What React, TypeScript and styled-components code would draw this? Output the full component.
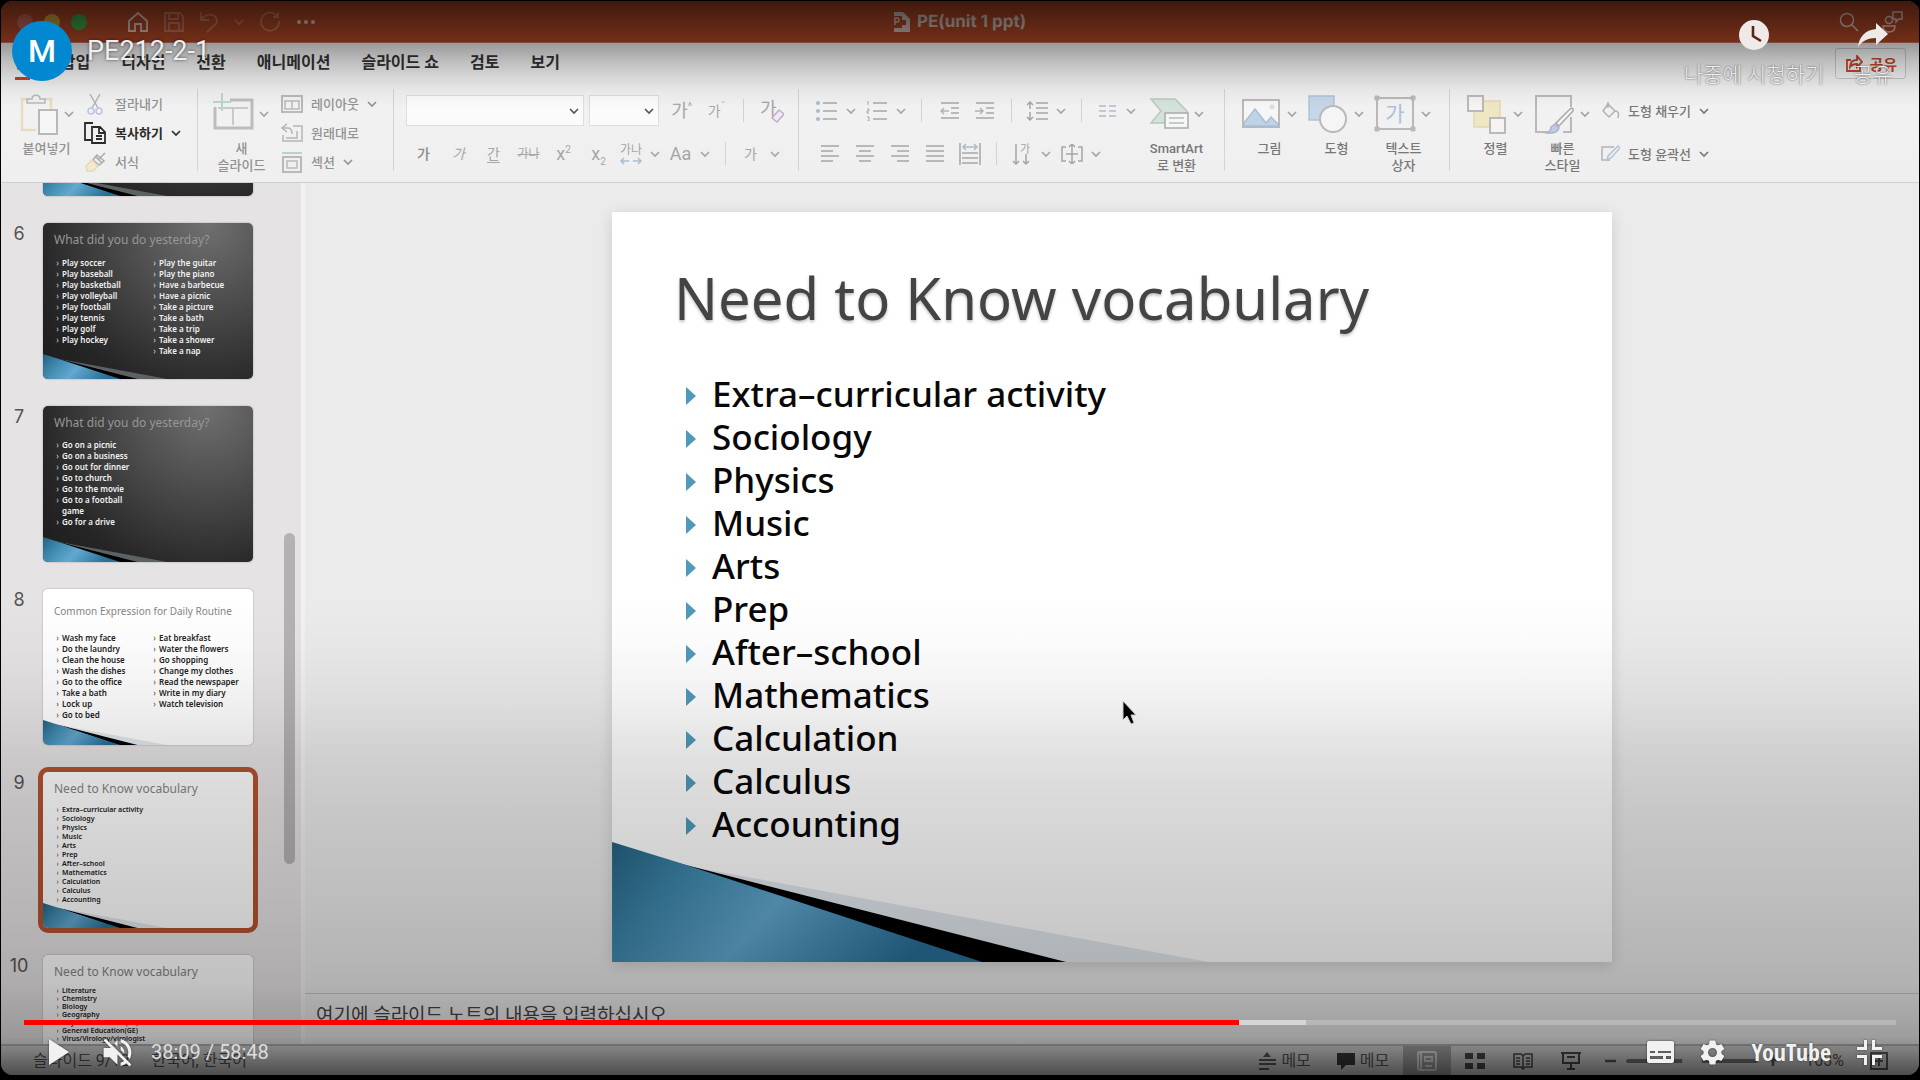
import React from "react";
import styled, { createGlobalStyle, css } from "styled-components";

const UI = `Roboto, "Noto Sans CJK KR", sans-serif`;
const SLIDE = `"Noto Sans", "Noto Sans CJK KR", sans-serif`;

const Global = createGlobalStyle`
  * { box-sizing: border-box; }
  html, body { margin: 0; background: #000; }
  button, input, select, textarea { font: inherit; color: inherit; }
  button { border: 0; padding: 0; background: none; }
  ul, h1, h2, p { margin: 0; padding: 0; }
  ul { list-style: none; }
`;

/* ---------- shell ---------- */
const Page = styled.div`
  position: relative;
  height: 100vh;
  padding: 1px 1px 5px;
  background: #000;
  overflow: hidden;
  font-family: ${UI};
`;
const AppWindow = styled.div`
  display: flex;
  flex-direction: column;
  height: 100%;
  border-radius: 12px;
  overflow: hidden;
  background: #ececec;
`;

/* ---------- title bar ---------- */
const TitleBar = styled.header`
  display: grid;
  grid-template-columns: 1fr auto 1fr;
  align-items: center;
  height: 42px;
  flex: none;
  padding: 0 16px;
  background: #b84a27;
  border-bottom: 1px solid #c9785f;
  color: #fff;
`;
const BarSide = styled.div<{ $end?: boolean }>`
  display: flex;
  align-items: center;
  gap: ${(p) => (p.$end ? 22 : 15)}px;
  justify-content: ${(p) => (p.$end ? "flex-end" : "flex-start")};
`;
const Lights = styled.div`
  display: flex;
  gap: 11px;
  margin-right: 25px;
`;
const Light = styled.span<{ $c: string }>`
  width: 16px;
  height: 16px;
  border-radius: 50%;
  background: ${(p) => p.$c};
`;
const BarButton = styled.button<{ $dim?: boolean }>`
  display: flex;
  align-items: center;
  opacity: ${(p) => (p.$dim ? 0.28 : 0.75)};
`;
const DocTitle = styled.h1`
  display: flex;
  align-items: center;
  gap: 7px;
  font: 700 17px/20px Inter, sans-serif;
  text-rendering: geometricPrecision;
  color: #dccbc5;
`;

/* ---------- tabs ---------- */
const TabBar = styled.nav`
  display: flex;
  justify-content: space-between;
  height: 42px;
  flex: none;
  padding: 5px 13px 5px 14px;
  background: #f0f0f0;
`;
const Tabs = styled.div`
  display: flex;
  gap: 31px;
`;
const Tab = styled.button<{ $on?: boolean }>`
  font-size: 16px;
  font-weight: 700;
  line-height: 26px;
  color: ${(p) => (p.$on ? "#b7472a" : "#333")};
  border-bottom: 3px solid ${(p) => (p.$on ? "#b7472a" : "transparent")};
`;
const ShareButton = styled.button`
  display: flex;
  align-items: center;
  gap: 6px;
  height: 31px;
  padding: 0 8px 0 10px;
  border: 1px solid #c8c8c8;
  border-radius: 3px;
  background: #fafafa33;
  color: #c0482a;
  font-size: 15px;
  font-weight: 700;
`;

/* ---------- ribbon ---------- */
const Ribbon = styled.div`
  display: flex;
  align-items: flex-start;
  height: 98px;
  flex: none;
  padding-top: 4px;
  background: linear-gradient(#f2f2f2, #efefef);
  border-bottom: 1px solid #cfcfcf;
  color: #8c8c8c;
`;
const Group = styled.div<{ $w?: number; $pl: number; $gap?: number }>`
  display: flex;
  align-items: flex-start;
  gap: ${(p) => p.$gap ?? 7}px;
  width: ${(p) => (p.$w ? p.$w + "px" : "auto")};
  height: 82px;
  padding-left: ${(p) => p.$pl}px;
  border-right: ${(p) => (p.$w ? "1px solid #d4d4d4" : "0")};
  flex: none;
`;
const Big = styled.button`
  display: grid;
  grid-template-columns: 42px 12px;
  align-items: center;
  column-gap: 5px;
  width: 60px;
  padding-top: 4px;
  flex: none;
  color: #a2a2a2;
`;
const BigLabel = styled.span<{ $dark?: boolean }>`
  grid-column: 1 / -1;
  margin-top: 5px;
  text-align: center;
  white-space: pre;
  font-size: 13px;
  font-weight: 500;
  line-height: 17px;
  color: ${(p) => (p.$dark ? "#777" : "#929292")};
`;
const Column = styled.div`
  display: flex;
  flex-direction: column;
`;
const Small = styled.button<{ $strong?: boolean; $tall?: boolean }>`
  display: flex;
  align-items: center;
  gap: 8px;
  height: ${(p) => (p.$tall ? 43 : 29)}px;
  font-size: 13px;
  font-weight: ${(p) => (p.$strong ? 700 : 500)};
  color: ${(p) => (p.$strong ? "#2b2b2b" : p.$tall ? "#777" : "#939393")};
`;
const ToolRow = styled.div`
  display: flex;
  align-items: center;
  height: 43px;
`;
const Tool = styled.button<{ $split?: boolean }>`
  display: grid;
  grid-template-columns: ${(p) => (p.$split ? "29px 20px" : "35px")};
  place-items: center;
  padding-right: ${(p) => (p.$split ? 1 : 0)}px;
  font-size: 14px;
  font-weight: 400;
  line-height: 18px;
  color: #a6a6a6;
`;
const Glyph = styled.span<{ $k?: "b" | "i" | "u" | "s" | "big" }>`
  ${(p) => p.$k === "b" && css`font-weight: 500; color: #8a8a8a;`}
  ${(p) => p.$k === "i" && css`font-style: italic;`}
  ${(p) => p.$k === "u" && css`text-decoration: underline; text-underline-offset: 3px;`}
  ${(p) => p.$k === "s" && css`text-decoration: line-through; font-size: 12px;`}
  ${(p) => p.$k === "big" && css`font-size: 18px;`}
  sup, sub { font-size: 10px; line-height: 0; }
`;
const ToolSep = styled.span`
  width: 1px;
  height: 23px;
  margin: 0 10px 0 9px;
  background: #d2d2d2;
`;
const Combo = styled.label<{ $w: number }>`
  display: grid;
  grid-template-columns: 1fr 14px;
  align-items: center;
  width: ${(p) => p.$w}px;
  height: 31px;
  margin-right: 5px;
  border: 1px solid #dedede;
  background: #fbfbfb;
  color: #555;
  select {
    grid-area: 1 / 1 / 2 / 3;
    width: 100%;
    height: 100%;
    border: 0;
    background: none;
    appearance: none;
  }
  svg { grid-area: 1 / 2 / 2 / 3; pointer-events: none; }
`;

/* ---------- body ---------- */
const Body = styled.div`
  display: flex;
  flex: 1;
  min-height: 0;
`;
const Sidebar = styled.aside`
  display: flex;
  justify-content: space-between;
  width: 304px;
  flex: none;
  overflow: hidden;
  background: #e6e3e4;
  border-right: 4px solid #f3f2f2;
`;
const ThumbList = styled.ol`
  display: flex;
  flex-direction: column;
  gap: 27px;
  margin: -143px 0 0;
  padding: 0;
  list-style: none;
`;
const ThumbRow = styled.li`
  display: flex;
  gap: 6px;
`;
const ThumbNo = styled.span`
  width: 36px;
  text-align: center;
  font: 400 18px/21px Inter, sans-serif;
  color: #555;
`;
const Thumb = styled.article<{ $dark?: boolean; $on?: boolean }>`
  position: relative;
  display: flex;
  flex-direction: column;
  width: 210px;
  height: 156px;
  padding: 0 11px;
  overflow: hidden;
  border-radius: 5px;
  font-family: ${SLIDE};
  color: ${(p) => (p.$dark ? "#f2f2f2" : "#222")};
  background: ${(p) =>
    p.$dark ? "radial-gradient(circle at 78% 0, #707070 0, #4b4b4b 38%, #262626 75%, #1b1b1b 100%)" : "#fff"};
  box-shadow: ${(p) => (p.$on ? "0 0 0 5px #b4532f" : "0 0 1px 1px #d0cdce")};
`;
const ThumbTitle = styled.h2<{ $small?: boolean; $dark?: boolean }>`
  font-size: ${(p) => (p.$small ? 10 : 12)}px;
  line-height: 16px;
  font-weight: 400;
  white-space: nowrap;
  margin-top: ${(p) => (p.$small ? 14 : 9)}px;
  color: ${(p) => (p.$dark ? "#979797" : "#858585")};
`;
const ThumbCols = styled.div<{ $gap: number }>`
  display: grid;
  grid-template-columns: 97px 1fr;
  margin-top: ${(p) => p.$gap}px;
`;
const ThumbItems = styled.ul<{ $lh: number }>`
  font-size: ${(p) => (p.$lh < 11 ? 7 : 8)}px;
  font-weight: 600;
  line-height: ${(p) => p.$lh}px;
  white-space: pre;
  li { display: flex; gap: 3px; }
  li::before { content: "›"; width: 5px; text-align: right; opacity: 0.6; }
`;
const Scroll = styled.div`
  width: 11px;
  margin: 350px 6px 180px 0;
  border-radius: 6px;
  background: #b5b2b4;
`;

/* ---------- slide ---------- */
const Main = styled.main`
  display: flex;
  flex-direction: column;
  flex: 1;
  min-width: 0;
`;
const Canvas = styled.section`
  display: flex;
  justify-content: center;
  flex: 1;
  min-height: 0;
  padding: 29px 0 31px;
  background: #ebebeb;
`;
const Slide = styled.article`
  position: relative;
  height: 100%;
  aspect-ratio: 4 / 3;
  padding: 50px 62px 0;
  background: #fff;
  box-shadow: 0 3px 14px #00000024;
  font-family: ${SLIDE};
`;
const SlideTitle = styled.h1`
  font-size: 58px;
  line-height: 72px;
  font-weight: 400;
  color: #444;
  white-space: nowrap;
  text-shadow: 0 2px 3px #00000040;
`;
const Vocab = styled.ul`
  margin: 38px 0 0 12px;
  font-size: 35px;
  font-weight: 500;
  line-height: 43px;
  color: #080808;
`;
const VocabItem = styled.li`
  display: flex;
  align-items: center;
  gap: 16px;
  height: 43px;
  &::before {
    content: "";
    margin-top: 4px;
    border: 9px solid transparent;
    border-left: 10px solid #4f9ab8;
    border-right: 0;
  }
`;
const Decor = styled.svg`
  position: absolute;
  left: 0;
  bottom: 0;
  width: 100%;
  pointer-events: none;
`;
const Pointer = styled.svg`
  position: absolute;
  left: 51%;
  top: 65%;
`;
const Notes = styled.div`
  height: 51px;
  flex: none;
  border-top: 1px solid #c6c6c6;
  background: #ececec;
  input {
    display: block;
    width: 100%;
    height: 42px;
    padding: 0 11px;
    border: 0;
    background: none;
    font-size: 19px;
  }
  input::placeholder { color: #444; opacity: 1; }
`;

/* ---------- status ---------- */
const StatusBar = styled.footer`
  display: flex;
  align-items: center;
  justify-content: space-between;
  height: 31px;
  flex: none;
  padding: 0 31px 0 32px;
  border-top: 2px solid #b4b4b4;
  background: #d8d8d8;
  color: #555;
  font-size: 16px;
  line-height: 24px;
`;
const StatusSide = styled.div<{ $gap: number }>`
  display: flex;
  align-items: center;
  gap: ${(p) => p.$gap}px;
  height: 100%;
`;
const StatusButton = styled.button`
  display: flex;
  align-items: center;
  gap: 5px;
  color: #5a5a5a;
`;
const Views = styled.div`
  display: flex;
  height: 100%;
  margin: 0 -16px 0 -12px;
`;
const View = styled.button<{ $on?: boolean }>`
  display: grid;
  place-items: center;
  width: 48px;
  height: 100%;
  background: ${(p) => (p.$on ? "#a6a6a6" : "none")};
  color: ${(p) => (p.$on ? "#e8e8e8" : "#4a4a4a")};
`;
const ZoomSlider = styled.input`
  appearance: none;
  width: 132px;
  height: 4px;
  margin: 0;
  border-radius: 2px;
  background: #777;
  &::-webkit-slider-thumb {
    appearance: none;
    width: 20px;
    height: 20px;
    border-radius: 50%;
    background: #d6d6d6;
  }
`;

/* ---------- player ---------- */
const Player = styled.div`
  position: absolute;
  inset: 0;
  display: flex;
  flex-direction: column;
  justify-content: space-between;
  padding-bottom: 1px;
  color: #eee;
  background:
    linear-gradient(#000000aa 0, #0000005f 42px, #00000038 60px, #0000001a 78px, #0000000a 92px, transparent 108px),
    linear-gradient(transparent 55%, #00000005 60%, #0000000f 65%, #0000001e 70%, #00000027 75%, #00000033 84%, #0000003e 91%, #00000055 96%, #0000006a 97.2%, #000000b0 100%);
`;
const PlayerTop = styled.div`
  display: flex;
  align-items: flex-start;
  justify-content: space-between;
  padding: 20px 28px 0 12px;
`;
const Channel = styled.a`
  display: flex;
  align-items: center;
  gap: 15px;
  padding-top: 1px;
  color: #eee;
  text-decoration: none;
  font-size: 27px;
  line-height: 32px;
  text-shadow: 0 0 3px #000000a0;
`;
const Avatar = styled.span`
  display: grid;
  place-items: center;
  width: 60px;
  height: 60px;
  border-radius: 50%;
  background: #0288d1;
  color: #fff;
  font-size: 32px;
  font-weight: 500;
  text-shadow: none;
`;
const TopActions = styled.div`
  display: flex;
  gap: 29px;
`;
const TopAction = styled.button`
  display: flex;
  flex-direction: column;
  align-items: center;
  gap: 9px;
  font-size: 21px;
  font-weight: 300;
  line-height: 32px;
  text-shadow: 0 0 2px #000000b0;
`;
const Seek = styled.input`
  appearance: none;
  display: block;
  width: calc(100% - 48px);
  height: 5px;
  margin: 0 24px;
  background: linear-gradient(
    to right,
    #f00 0 64.9%,
    #d6d6d6 64.9% 68.5%,
    #ffffff38 68.5%
  );
  &::-webkit-slider-thumb { appearance: none; width: 0; height: 0; }
`;
const Controls = styled.div`
  display: flex;
  align-items: center;
  justify-content: space-between;
  height: 54px;
  padding: 0 38px 0 49px;
`;
const ControlSide = styled.div<{ $gap: number }>`
  display: flex;
  align-items: center;
  gap: ${(p) => p.$gap}px;
`;
const Control = styled.button`
  display: flex;
  color: #f1f1f1;
  filter: drop-shadow(0 0 1px #00000080);
`;
const Time = styled.span`
  margin-left: -15px;
  font-size: 20px;
  color: #ddd;
`;
const Brand = styled.a`
  color: #f1f1f1;
  text-decoration: none;
  font: 700 24px/24px "Liberation Sans Narrow", "Open Sans Condensed", "Liberation Sans", sans-serif;
  text-shadow: 0 0 2px #00000080;
`;

/* ---------- drawings ---------- */
const Ico = ({ w = 20, h = w, vb = `0 0 ${w} ${h}`, sw = 1.5, children }: any) => (
  <svg width={w} height={h} viewBox={vb} fill="none" stroke="currentColor" strokeWidth={sw} aria-hidden="true">
    {children}
  </svg>
);
const Chev = () => (
  <Ico w={10} h={10} sw={1.7}>
    <path d="M1 3l4 4 4-4" />
  </Ico>
);
const G = "#b9b9b9";

const pasteIcon = (
  <Ico w={42} h={42}>
    <path d="M12 6H5v31h14M28 6h6v10" stroke="#eadcc0" strokeWidth="2.5" />
    <path d="M10 10V6h5c0-5 8-5 8 0h5v4z" stroke={G} />
    <rect x="22" y="17" width="18" height="24" stroke={G} fill="#f5f5f5" strokeWidth="2" />
  </Ico>
);
const newSlideIcon = (
  <Ico w={42} h={42}>
    <path d="M18 7h22v28H3V14" stroke="#bdbdbd" strokeWidth="3" />
    <path d="M6 15h30M21 15v17" stroke="#c9c9c9" strokeWidth="2" />
    <path d="M10 0v18M1 9h18" stroke="#bcd5cc" strokeWidth="2" />
  </Ico>
);
const smartIcon = (
  <Ico w={42} h={42}>
    <path d="M4 6h24l12 12v12H4l10-12z" fill="#d5e2d9" stroke="#b8c9be" />
    <rect x="18" y="20" width="23" height="15" fill="#f6f6f6" stroke="#a5ada8" />
    <path d="M22 25h15M22 30h15" stroke="#bbb" />
  </Ico>
);
const pictureIcon = (
  <Ico w={42} h={42}>
    <rect x="3" y="7" width="36" height="27" fill="#f6f6f6" stroke={G} strokeWidth="2" />
    <path d="M4 30l11-14 11 14 5-6 7 7v2H4z" fill="#bfd2e6" stroke="#a9bfd6" />
    <circle cx="32" cy="14" r="2.5" fill="#ddd" stroke="none" />
  </Ico>
);
const shapesIcon = (
  <Ico w={42} h={42}>
    <rect x="2" y="3" width="25" height="24" fill="#c5d6e8" stroke="#b0c2d6" />
    <circle cx="26" cy="26" r="13" fill="#f5f5f5" stroke={G} strokeWidth="2" />
  </Ico>
);
const textBoxIcon = (
  <Ico w={42} h={42}>
    <rect x="3" y="5" width="36" height="31" stroke={G} strokeWidth="2" />
    <path d="M1 3h4v4H1zM37 3h4v4h-4zM1 34h4v4H1zM37 34h4v4h-4z" fill={G} stroke={G} strokeWidth="1" />
    <text x="21" y="28" textAnchor="middle" fontSize="21" fill="#a9c0dc" stroke="none">가</text>
  </Ico>
);
const arrangeIcon = (
  <Ico w={42} h={42}>
    <rect x="8" y="8" width="26" height="26" fill="#efe6c4" stroke="#e2d7ad" />
    <rect x="2" y="3" width="15" height="15" fill="#f6f3f0" stroke={G} strokeWidth="2" />
    <rect x="24" y="25" width="15" height="15" fill="#f6f3f0" stroke={G} strokeWidth="2" />
  </Ico>
);
const quickIcon = (
  <Ico w={42} h={42}>
    <path d="M38 14V3H3v36h12M38 24v15h-8" stroke={G} strokeWidth="2" />
    <path d="M40 18L26 33l-3-3 14-14q4-2 3 2z" fill="#f4f4f4" stroke="#a8a8a8" />
    <path d="M22 31l4 4q-2 6-12 5 4-2 4-6z" fill="#c3cbe2" stroke="#aab3cf" />
  </Ico>
);
const cutIcon = (
  <Ico w={23} h={22}>
    <path d="M6 1l8 14M16 1L8 15" stroke="#b4b4b4" />
    <circle cx="7" cy="18" r="3" stroke="#b8c4e0" />
    <circle cx="15" cy="18" r="3" stroke="#b8c4e0" />
  </Ico>
);
const copyIcon = (
  <Ico w={23} h={22} sw={1.8}>
    <path d="M8 18H1V1h8" />
    <path d="M8 5h8l5 5v11H8zM15 5v6h6M12 14h6M12 17h6" />
  </Ico>
);
const brushIcon = (
  <Ico w={23} h={22}>
    <path d="M21 2l-6 6M11 5l7 7M13 4l7 6-5 4-6-5z" stroke="#ababab" />
    <path d="M8 9l6 6-5 5H3l-1-5z" fill="#f3e9d2" stroke="#e6d8b6" />
  </Ico>
);
const layoutIcon = (
  <Ico w={22} h={20}>
    <rect x="1" y="2" width="20" height="16" stroke={G} strokeWidth="2" />
    <path d="M4 7h14v8H4zM11 7v8" stroke={G} />
  </Ico>
);
const resetIcon = (
  <Ico w={22} h={20}>
    <path d="M12 3h9v15H2v-6M16 8v7H5" stroke="#c4c4c4" strokeWidth="2" />
    <path d="M6 1L1 5l5 4M1 5h6q4 0 4 6" stroke="#b5b5b5" />
  </Ico>
);
const sectionIcon = (
  <Ico w={22} h={22}>
    <path d="M1 2h20" stroke="#b9d2c8" strokeWidth="2" />
    <rect x="2" y="6" width="18" height="15" stroke={G} strokeWidth="2" />
    <rect x="6" y="10" width="10" height="7" stroke={G} />
  </Ico>
);
const bars = (rows: [number, number][], extra?: React.ReactNode) => (
  <Ico w={20} h={20}>
    {rows.map(([a, b], i) => (
      <path key={i} d={`M${a} ${2 + i * 5}H${b}`} />
    ))}
    {extra}
  </Ico>
);
const bulletsIcon = (
  <Ico w={22} h={20}>
    <path d="M7 2h14M7 10h14M7 18h14" />
    <g fill="#a9bccb" stroke="none">
      <circle cx="2" cy="2" r="2" /><circle cx="2" cy="10" r="2" /><circle cx="2" cy="18" r="2" />
    </g>
  </Ico>
);
const numbersIcon = (
  <Ico w={22} h={20}>
    <path d="M7 2h14M7 10h14M7 18h14" />
    <path d="M2 0v4M1 8h2v2H1v2h2M1 16h2v4H1" strokeWidth="1" />
  </Ico>
);
const outdentIcon = (
  <Ico w={20} h={20}><path d="M1 2h18M11 7h8M11 12h8M1 17h18" /><path d="M9 10H1m3-3l-3 3 3 3" stroke="#aab4c0" /></Ico>
);
const indentIcon = (
  <Ico w={20} h={20}><path d="M1 2h18M11 7h8M11 12h8M1 17h18" /><path d="M0 10h8M5 7l3 3-3 3" stroke="#aab4c0" /></Ico>
);
const spacingIcon = (
  <Ico w={22} h={20}><path d="M10 2h12M10 7h12M10 12h12M10 18h12M4 1v7M1 4l3-3 3 3M4 11v8M1 16l3 3 3-3" /></Ico>
);
const columnsIcon = (
  <Ico w={18} h={14}><path d="M1 2h7M1 7h7M1 12h7M11 2h7M11 7h7M11 12h7" stroke="#b4b9cc" /></Ico>
);
const distributeIcon = (
  <Ico w={22} h={22}><path d="M1 0v22M21 0v22M3 10h16M3 15h16M3 20h16" /><path d="M4 4h14M7 1L4 4l3 3M15 1l3 3-3 3" stroke="#a9bccf" /></Ico>
);
const directionIcon = (
  <Ico w={20} h={22}>
    <path d="M4 1v20M1 18l3 3 3-3M14 11v10M11 18l3 3 3-3" />
    <text x="8" y="10" fontSize="11" fill="currentColor" stroke="none">가</text>
  </Ico>
);
const alignTextIcon = (
  <Ico w={24} h={20}><path d="M6 3H2v14h4M18 3h4v14h-4M12 0v20M9 3l3-3 3 3M9 17l3 3 3-3M6 10h12" /></Ico>
);
const fillIcon = (
  <Ico w={20} h={20}><path d="M8 3l7 7-6 6-6-6 5-7zM8 1v6M15 10q5 0 3 7" stroke="#b2b2b2" /></Ico>
);
const outlineIcon = (
  <Ico w={20} h={20}><path d="M14 3H2v13h8" stroke="#b2b2b2" /><path d="M18 2l2 2-9 10-4 2 1-4z" stroke="#b4c2d8" /></Ico>
);

const Wedge = ({ dark }: { dark?: boolean }) => (
  <Decor viewBox="0 0 999 120" aria-hidden="true">
    <defs>
      <linearGradient id={dark ? "wedgeDark" : "wedge"} x1="0" y1="0" x2="1" y2="0.3">
        <stop offset="0" stopColor="#24607f" />
        <stop offset="0.25" stopColor="#3d87ac" />
        <stop offset="0.55" stopColor="#62a8d0" />
        <stop offset="1" stopColor="#286f98" />
      </linearGradient>
    </defs>
    <path d="M70 23Q250 56 596 120H440z" fill={dark ? "#5c6164" : "#e2e9ef"} />
    <path d="M62 20L454 120H360z" fill="#000" />
    <path d="M0 0L68 21 370 120H0z" fill={`url(#${dark ? "wedgeDark" : "wedge"})`} />
  </Decor>
);

const vocabulary = [
  "Extra–curricular activity", "Sociology", "Physics", "Music", "Arts", "Prep",
  "After–school", "Mathematics", "Calculation", "Calculus", "Accounting",
];

type Deck = { no: number; title: string; dark?: boolean; on?: boolean; small?: boolean; gap: number; lh: number; a: string[]; b?: string[] };
const deck: Deck[] = [
  { no: 5, title: "", dark: true, gap: 0, lh: 11, a: [] },
  {
    no: 6, title: "What did you do yesterday?", dark: true, gap: 9, lh: 11,
    a: ["Play soccer", "Play baseball", "Play basketball", "Play volleyball", "Play football", "Play tennis", "Play golf", "Play hockey"],
    b: ["Play the guitar", "Play the piano", "Have a barbecue", "Have a picnic", "Take a picture", "Take a bath", "Take a trip", "Take a shower", "Take a nap"],
  },
  {
    no: 7, title: "What did you do yesterday?", dark: true, gap: 8, lh: 11,
    a: ["Go on a picnic", "Go on a business", "Go out for dinner", "Go to church", "Go to the movie", "Go to a football\ngame", "Go for a drive"],
  },
  {
    no: 8, title: "Common Expression for Daily Routine", small: true, gap: 13, lh: 11,
    a: ["Wash my face", "Do the laundry", "Clean the house", "Wash the dishes", "Go to the office", "Take a bath", "Lock up", "Go to bed"],
    b: ["Eat breakfast", "Water the flowers", "Go shopping", "Change my clothes", "Read the newspaper", "Write in my diary", "Watch television"],
  },
  { no: 9, title: "Need to Know vocabulary", on: true, gap: 8, lh: 9, a: vocabulary },
  {
    no: 10, title: "Need to Know vocabulary", gap: 7, lh: 8,
    a: ["Literature", "Chemistry", "Biology", "Geography", "Physical Education(PE)", "General Education(GE)", "Virus/Virology/virologist"],
  },
];

const BigTool = ({ icon, label, dark }: { icon: React.ReactNode; label: string; dark?: boolean }) => (
  <Big type="button">
    {icon}
    <Chev />
    <BigLabel $dark={dark}>{label}</BigLabel>
  </Big>
);
const T = ({ children, split, name }: { children: React.ReactNode; split?: boolean; name: string }) => (
  <Tool type="button" $split={split} aria-label={name}>
    {children}
    {split && <Chev />}
  </Tool>
);

export default function App() {
  return (
    <Page>
      <Global />
      <AppWindow>
        <TitleBar>
          <BarSide>
            <Lights>
              <Light $c="#d0695c" /><Light $c="#d9a83c" /><Light $c="#3fae4e" />
            </Lights>
            <BarButton type="button" aria-label="홈">
              <Ico w={22} h={22} sw={1.8}><path d="M2 10l9-8 9 8v10h-6v-7H8v7H2z" /></Ico>
            </BarButton>
            <BarButton type="button" $dim aria-label="저장">
              <Ico w={20} h={20} sw={1.8}><path d="M1 1h15l3 3v15H1zM5 1v6h9V1M5 19v-8h10v8" /></Ico>
            </BarButton>
            <BarButton type="button" $dim aria-label="실행 취소">
              <Ico w={20} h={22} sw={1.8}><path d="M2 1v8h8M2 9q5-7 12-5 6 4 3 9l-9 8" /></Ico>
            </BarButton>
            <BarButton type="button" $dim aria-label="실행 취소 목록"><Chev /></BarButton>
            <BarButton type="button" $dim aria-label="다시 실행">
              <Ico w={22} h={22} sw={1.8}><path d="M18 5a9 9 0 1 0 2 5M19 1v5h-5" /></Ico>
            </BarButton>
            <BarButton type="button" aria-label="더 보기">
              <Ico w={20} h={6}><g fill="currentColor" stroke="none"><circle cx="3" cy="3" r="2" /><circle cx="10" cy="3" r="2" /><circle cx="17" cy="3" r="2" /></g></Ico>
            </BarButton>
          </BarSide>
          <DocTitle>
            <Ico w={16} h={20}>
              <path d="M0 0h9l7 7v13H0v-4h8v-3h4V8H8V4H0z" fill="currentColor" stroke="none" />
              <path d="M1 13V6h3q2 2 0 4H1" strokeWidth="1.5" />
            </Ico>
            PE(unit 1 ppt)
          </DocTitle>
          <BarSide $end>
            <BarButton type="button" aria-label="검색">
              <Ico w={20} h={20}><circle cx="8" cy="8" r="6.5" /><path d="M13 13l6 6" /></Ico>
            </BarButton>
            <BarButton type="button" aria-label="메모">
              <Ico w={22} h={22}><circle cx="8" cy="9" r="3.5" /><path d="M2 15h12q0 6-6 6t-6-6zM12 1h9v7h-3l-3 3V8h-3z" /></Ico>
            </BarButton>
          </BarSide>
        </TitleBar>

        <TabBar>
          <Tabs>
            {["홈", "삽입", "디자인", "전환", "애니메이션", "슬라이드 쇼", "검토", "보기"].map((t, i) => (
              <Tab key={t} type="button" $on={i === 0}>{t}</Tab>
            ))}
          </Tabs>
          <ShareButton type="button">
            <Ico w={17} h={17} sw={1.8}><path d="M5 5H1v11h13v-4M4 12q0-7 7-7V1l5 6-5 5V9q-5 0-7 3z" /></Ico>
            공유
          </ShareButton>
        </TabBar>

        <Ribbon>
          <Group $w={197} $pl={16} $gap={7}>
            <BigTool icon={pasteIcon} label="붙여넣기" />
            <Column>
              <Small type="button">{cutIcon}잘라내기</Small>
              <Small type="button" $strong>{copyIcon}복사하기<Chev /></Small>
              <Small type="button">{brushIcon}서식</Small>
            </Column>
          </Group>
          <Group $w={196} $pl={14} $gap={9}>
            <BigTool icon={newSlideIcon} label={"새\n슬라이드"} />
            <Column>
              <Small type="button">{layoutIcon}레이아웃<Chev /></Small>
              <Small type="button">{resetIcon}원래대로</Small>
              <Small type="button">{sectionIcon}섹션<Chev /></Small>
            </Column>
          </Group>
          <Group $w={405} $pl={12}>
            <Column>
              <ToolRow>
                <Combo $w={178}><select aria-label="글꼴" /><Chev /></Combo>
                <Combo $w={70}><select aria-label="글꼴 크기" /><Chev /></Combo>
                <T name="글꼴 크게"><Glyph $k="big">가<sup>^</sup></Glyph></T>
                <T name="글꼴 작게"><Glyph>가<sup>ˇ</sup></Glyph></T>
                <ToolSep />
                <T name="서식 지우기">
                  <Ico w={24} h={24}>
                    <text x="0" y="16" fontSize="18" fill="currentColor" stroke="none">가</text>
                    <path d="M19 11l5 4-7 8-5-4z" fill="#f1e9f2" stroke="#c3aec6" />
                  </Ico>
                </T>
              </ToolRow>
              <ToolRow>
                <T name="굵게"><Glyph $k="b">가</Glyph></T>
                <T name="기울임꼴"><Glyph $k="i">가</Glyph></T>
                <T name="밑줄"><Glyph $k="u">간</Glyph></T>
                <T name="취소선"><Glyph $k="s">가나</Glyph></T>
                <T name="위 첨자"><Glyph $k="big">x<sup>2</sup></Glyph></T>
                <T name="아래 첨자"><Glyph $k="big">x<sub>2</sub></Glyph></T>
                <T name="문자 간격" split>
                  <Ico w={24} h={24}>
                    <text x="1" y="12" fontSize="12" fill="currentColor" stroke="none">가나</text>
                    <path d="M10 19H2m3-3l-3 3 3 3M14 19h8m-3-3l3 3-3 3" stroke="#a9bfd3" />
                  </Ico>
                </T>
                <T name="대소문자" split><Glyph $k="big">Aa</Glyph></T>
                <ToolSep />
                <T name="글꼴 색" split><Glyph>가</Glyph></T>
              </ToolRow>
            </Column>
          </Group>
          <Group $w={426} $pl={13} $gap={5}>
            <Column>
              <ToolRow>
                <T name="글머리 기호" split>{bulletsIcon}</T>
                <T name="번호" split>{numbersIcon}</T>
                <ToolSep />
                <T name="내어쓰기">{outdentIcon}</T>
                <T name="들여쓰기">{indentIcon}</T>
                <ToolSep />
                <T name="줄 간격" split>{spacingIcon}</T>
                <ToolSep />
                <T name="열" split>{columnsIcon}</T>
              </ToolRow>
              <ToolRow>
                <T name="왼쪽 맞춤">{bars([[1, 19], [1, 13], [1, 19], [1, 13]])}</T>
                <T name="가운데 맞춤">{bars([[1, 19], [4, 16], [1, 19], [4, 16]])}</T>
                <T name="오른쪽 맞춤">{bars([[1, 19], [7, 19], [1, 19], [7, 19]])}</T>
                <T name="양쪽 맞춤">{bars([[1, 19], [1, 19], [1, 19], [1, 19]])}</T>
                <T name="균등 분할">{distributeIcon}</T>
                <ToolSep />
                <T name="텍스트 방향" split>{directionIcon}</T>
                <T name="텍스트 맞춤" split>{alignTextIcon}</T>
              </ToolRow>
            </Column>
            <BigTool dark icon={smartIcon} label={"SmartArt\n로 변환"} />
          </Group>
          <Group $w={225} $pl={15}>
            <BigTool dark icon={pictureIcon} label="그림" />
            <BigTool dark icon={shapesIcon} label="도형" />
            <BigTool dark icon={textBoxIcon} label={"텍스트\n상자"} />
          </Group>
          <Group $pl={16}>
            <BigTool dark icon={arrangeIcon} label="정렬" />
            <BigTool dark icon={quickIcon} label={"빠른\n스타일"} />
            <Column>
              <Small type="button" $tall>{fillIcon}도형 채우기<Chev /></Small>
              <Small type="button" $tall>{outlineIcon}도형 윤곽선<Chev /></Small>
            </Column>
          </Group>
        </Ribbon>

        <Body>
          <Sidebar>
            <ThumbList>
              {deck.map((s) => (
                <ThumbRow key={s.no}>
                  <ThumbNo>{s.no}</ThumbNo>
                  <Thumb $dark={s.dark} $on={s.on}>
                    <Wedge dark={s.dark} />
                    <ThumbTitle $small={s.small} $dark={s.dark}>{s.title}</ThumbTitle>
                    <ThumbCols $gap={s.gap}>
                      <ThumbItems $lh={s.lh}>{s.a.map((t) => <li key={t}>{t}</li>)}</ThumbItems>
                      {s.b && <ThumbItems $lh={s.lh}>{s.b.map((t) => <li key={t}>{t}</li>)}</ThumbItems>}
                    </ThumbCols>
                  </Thumb>
                </ThumbRow>
              ))}
            </ThumbList>
            <Scroll />
          </Sidebar>
          <Main>
            <Canvas>
              <Slide>
                <Wedge />
                <SlideTitle>Need to Know vocabulary</SlideTitle>
                <Vocab>
                  {vocabulary.map((v) => <VocabItem key={v}>{v}</VocabItem>)}
                </Vocab>
                <Pointer width="15" height="26" viewBox="0 0 15 26" aria-hidden="true">
                  <path d="M1 1v19l4-4 4 8 3-1-3-8h5z" fill="#000" stroke="#ddd" />
                </Pointer>
              </Slide>
            </Canvas>
            <Notes>
              <input aria-label="슬라이드 노트" placeholder="여기에 슬라이드 노트의 내용을 입력하십시오" />
            </Notes>
          </Main>
        </Body>

        <StatusBar>
          <StatusSide $gap={22}>
            <span>슬라이드 9/12</span>
            <span>한국어, 한국어</span>
          </StatusSide>
          <StatusSide $gap={26}>
            <StatusButton type="button">
              <Ico w={17} h={18} sw={2}><path d="M0 8h17M0 12h17M0 17h10" /><path d="M4 5l4-5 4 5z" fill="currentColor" stroke="none" /></Ico>
              메모
            </StatusButton>
            <StatusButton type="button">
              <Ico w={18} h={18}><path d="M0 1h18v12H9l-5 5v-5H0z" fill="#3a3a3a" stroke="none" /></Ico>
              메모
            </StatusButton>
            <Views>
              <View type="button" $on aria-label="기본 보기">
                <Ico w={20} h={20} sw={2}><rect x="1" y="1" width="18" height="18" rx="2" /><path d="M4 1v18M8 6h7v4H8zM8 15h7" /></Ico>
              </View>
              <View type="button" aria-label="여러 슬라이드">
                <Ico w={20} h={18}><path d="M0 1h8v6H0zM12 1h8v6h-8zM0 11h8v6H0zM12 11h8v6h-8z" fill="currentColor" stroke="none" /></Ico>
              </View>
              <View type="button" aria-label="읽기용 보기">
                <Ico w={20} h={18}><path d="M1 2h7l2 2 2-2h7v13h-7l-2 2-2-2H1zM10 4v13M3 6h4M3 9h4M3 12h4M13 6h4M13 9h4M13 12h4" /></Ico>
              </View>
              <View type="button" aria-label="슬라이드 쇼">
                <Ico w={20} h={18} sw={2}><path d="M0 1h20M2 1v10h16V1M10 11v5M6 17h8M6 5h8" /></Ico>
              </View>
            </Views>
            <StatusSide $gap={10}>
              <StatusButton type="button" aria-label="축소"><Ico w={11} h={10} sw={2.5}><path d="M0 5h11" /></Ico></StatusButton>
              <ZoomSlider type="range" aria-label="확대/축소" defaultValue={50} />
              <StatusButton type="button" aria-label="확대"><Ico w={11} h={11} sw={2.5}><path d="M0 5h11M5 0v11" /></Ico></StatusButton>
            </StatusSide>
            <span>103%</span>
            <StatusButton type="button" aria-label="창에 맞춤">
              <Ico w={18} h={18} sw={2}><rect x="1" y="1" width="16" height="16" /><path d="M9 4v10M5 9h8" /></Ico>
            </StatusButton>
          </StatusSide>
        </StatusBar>
      </AppWindow>

      <Player>
        <PlayerTop>
          <Channel href="#video">
            <Avatar>M</Avatar>
            PE212-2-1
          </Channel>
          <TopActions>
            <TopAction type="button">
              <svg width="30" height="30" viewBox="0 0 30 30" aria-hidden="true">
                <circle cx="15" cy="15" r="15" fill="#efeae8" />
                <path d="M14 6v10l8 5" fill="none" stroke="#5c2415" strokeWidth="2.6" />
              </svg>
              나중에 시청하기
            </TopAction>
            <TopAction type="button">
              <svg width="30" height="30" viewBox="0 0 30 30" aria-hidden="true">
                <path d="M18 3l12 11-12 11v-7C10 18 4 21 0 27 1 17 7 10 18 9z" fill="#efeae8" />
              </svg>
              공유
            </TopAction>
          </TopActions>
        </PlayerTop>
        <div>
          <Seek type="range" aria-label="탐색" defaultValue={64} />
          <Controls>
            <ControlSide $gap={30}>
              <Control type="button" aria-label="재생">
                <svg width="20" height="26" viewBox="0 0 20 26"><path d="M0 0l20 13L0 26z" fill="currentColor" /></svg>
              </Control>
              <Control type="button" aria-label="음소거 해제">
                <svg width="37" height="37" viewBox="0 0 24 24">
                  <path fill="currentColor" d="M16.5 12c0-1.77-1.02-3.29-2.5-4.03v2.21l2.45 2.45c.03-.2.05-.41.05-.63zm2.5 0c0 .94-.2 1.82-.54 2.64l1.51 1.51C20.63 14.91 21 13.5 21 12c0-4.28-2.99-7.86-7-8.77v2.06c2.89.86 5 3.54 5 6.71zM4.27 3L3 4.27 7.73 9H3v6h4l5 5v-6.73l4.25 4.25c-.67.52-1.42.93-2.25 1.18v2.06c1.38-.31 2.63-.95 3.69-1.81L19.73 21 21 19.73l-9-9L4.27 3zM12 4L9.91 6.09 12 8.18V4z" />
                </svg>
              </Control>
              <Time>38:09 / 58:48</Time>
            </ControlSide>
            <ControlSide $gap={26}>
              <Control type="button" aria-label="자막">
                <svg width="27" height="22" viewBox="0 0 27 22">
                  <path fill="currentColor" fillRule="evenodd" d="M2 0h23q2 0 2 2v18q0 2-2 2H2q-2 0-2-2V2q0-2 2-2zM3 10v2h5v-2zM11 10v2h13v-2zM3 15v3h13v-3zM19 15v3h5v-3z" />
                </svg>
              </Control>
              <Control type="button" aria-label="설정">
                <svg width="25" height="25" viewBox="2 2 20 20">
                  <path fill="currentColor" d="M19.14 12.94c.04-.3.06-.61.06-.94 0-.32-.02-.64-.07-.94l2.03-1.58c.18-.14.23-.41.12-.61l-1.92-3.32c-.12-.22-.37-.29-.59-.22l-2.39.96c-.5-.38-1.03-.7-1.62-.94l-.36-2.54c-.04-.24-.24-.41-.48-.41h-3.84c-.24 0-.43.17-.47.41l-.36 2.54c-.59.24-1.13.57-1.62.94l-2.39-.96c-.22-.08-.47 0-.59.22L2.74 8.87c-.12.21-.08.47.12.61l2.03 1.58c-.05.3-.09.63-.09.94s.02.64.07.94l-2.03 1.58c-.18.14-.23.41-.12.61l1.92 3.32c.12.22.37.29.59.22l2.39-.96c.5.38 1.03.7 1.62.94l.36 2.54c.05.24.24.41.48.41h3.84c.24 0 .44-.17.47-.41l.36-2.54c.59-.24 1.13-.56 1.62-.94l2.39.96c.22.08.47 0 .59-.22l1.92-3.32c.12-.22.07-.47-.12-.61l-2.01-1.58zM12 15.6c-1.98 0-3.6-1.62-3.6-3.6s1.62-3.6 3.6-3.6 3.6 1.62 3.6 3.6-1.62 3.6-3.6 3.6z" />
                </svg>
              </Control>
              <Brand href="#youtube">YouTube</Brand>
              <Control type="button" aria-label="전체화면 종료">
                <svg width="25" height="25" viewBox="0 0 25 25" fill="none" stroke="currentColor" strokeWidth="3">
                  <path d="M0 8.5h8.5V0M16.5 0v8.500H25M0 16.500h8.500V25M25 16.500h-8.500V25" />
                </svg>
              </Control>
            </ControlSide>
          </Controls>
        </div>
      </Player>
    </Page>
  );
}
